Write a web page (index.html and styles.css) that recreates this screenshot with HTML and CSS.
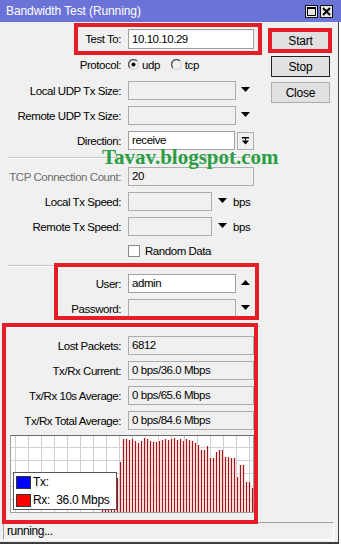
FILE: index.html
```html
<!DOCTYPE html>
<html lang="en">
<head>
    <meta charset="UTF-8">
    <meta name="viewport" content="width=device-width, initial-scale=1.0">
    <title>Bandwidth Test (Running)</title>
    <link rel="stylesheet" href="styles.css">
</head>
<body>
    <div class="app">
        <div class="titlebar">
            <span class="title">Bandwidth Test (Running)</span>
            <span class="tb-btn"><svg width="9" height="9" viewBox="0 0 9 9"><path d="M0.5 0.5H8.5V8.5H0.5Z" fill="none" stroke="#000"/><rect x="0" y="0" width="9" height="2" fill="#000"/></svg></span>
            <span class="tb-btn"><svg width="9" height="9" viewBox="0 0 9 9"><path d="M1 1L8 8M8 1L1 8" stroke="#000" stroke-width="2"/></svg></span>
        </div>
        <div class="frame">
            <div class="main">
                <div class="form">
                    <div class="row">
                        <label>Test To:</label>
                        <div class="field"><span class="inp on wide tall">10.10.10.29</span></div>
                    </div>
                    <div class="row gap1">
                        <label>Protocol:</label>
                        <div class="field">
                            <svg class="radio" width="11" height="11" viewBox="0 0 11 11"><path d="M2 9A4.7 4.7 0 0 1 9 2" fill="none" stroke="#555" stroke-width="1.4"/><path d="M9 2A4.7 4.7 0 0 1 2 9" fill="none" stroke="#d8d8d8" stroke-width="1.4"/><circle cx="5.5" cy="5.5" r="2" fill="#000"/></svg>
                            <span class="opt">udp</span>
                            <svg class="radio" width="11" height="11" viewBox="0 0 11 11"><path d="M2 9A4.7 4.7 0 0 1 9 2" fill="none" stroke="#555" stroke-width="1.4"/><path d="M9 2A4.7 4.7 0 0 1 2 9" fill="none" stroke="#d8d8d8" stroke-width="1.4"/></svg>
                            <span class="opt">tcp</span>
                        </div>
                    </div>
                    <div class="row gap1">
                        <label>Local UDP Tx Size:</label>
                        <div class="field"><span class="inp mid"></span><svg class="arr" width="9" height="5"><path d="M0 0H9L4.5 5Z"/></svg></div>
                    </div>
                    <div class="row">
                        <label>Remote UDP Tx Size:</label>
                        <div class="field"><span class="inp mid"></span><svg class="arr" width="9" height="5"><path d="M0 0H9L4.5 5Z"/></svg></div>
                    </div>
                    <div class="row">
                        <label>Direction:</label>
                        <div class="field">
                            <span class="inp on dir">receive</span>
                            <span class="ddbtn"><svg width="7" height="8" viewBox="0 0 7 8"><rect x="0" y="0" width="7" height="1.5"/><rect x="3" y="1.5" width="1" height="2"/><path d="M0 3.5H7L3.5 7.5Z"/></svg></span>
                        </div>
                    </div>
                    <div class="sep sep-a"></div>
                    <div class="row">
                        <label class="off">TCP Connection Count:</label>
                        <div class="field"><span class="inp wide">20</span></div>
                    </div>
                    <div class="row">
                        <label>Local Tx Speed:</label>
                        <div class="field"><span class="inp speed"></span><svg class="arr arr-s" width="9" height="5"><path d="M0 0H9L4.5 5Z"/></svg><span class="unit">bps</span></div>
                    </div>
                    <div class="row">
                        <label>Remote Tx Speed:</label>
                        <div class="field"><span class="inp speed"></span><svg class="arr arr-s" width="9" height="5"><path d="M0 0H9L4.5 5Z"/></svg><span class="unit">bps</span></div>
                    </div>
                    <div class="row short">
                        <label></label>
                        <div class="field"><span class="check"></span><span class="opt">Random Data</span></div>
                    </div>
                    <div class="sep sep-b"></div>
                    <div class="row">
                        <label>User:</label>
                        <div class="field"><span class="inp on mid">admin</span><svg class="arr" width="9" height="5"><path d="M0 5H9L4.5 0Z"/></svg></div>
                    </div>
                    <div class="row">
                        <label>Password:</label>
                        <div class="field"><span class="inp mid"></span><svg class="arr" width="9" height="5"><path d="M0 0H9L4.5 5Z"/></svg></div>
                    </div>
                    <div class="sep sep-c"></div>
                    <div class="row">
                        <label>Lost Packets:</label>
                        <div class="field"><span class="inp wide">6812</span></div>
                    </div>
                    <div class="row">
                        <label>Tx/Rx Current:</label>
                        <div class="field"><span class="inp wide">0 bps/36.0 Mbps</span></div>
                    </div>
                    <div class="row">
                        <label>Tx/Rx 10s Average:</label>
                        <div class="field"><span class="inp wide">0 bps/65.6 Mbps</span></div>
                    </div>
                    <div class="row">
                        <label>Tx/Rx Total Average:</label>
                        <div class="field"><span class="inp wide">0 bps/84.6 Mbps</span></div>
                    </div>
                    <div class="graph">
                        <svg width="242" height="76" viewBox="1 1 242 76">
                            <defs>
                                <pattern id="grid" x="5" y="12" width="13" height="13" patternUnits="userSpaceOnUse">
                                    <path d="M0.5 0V13M0 0.5H13" stroke="#d0d0d0" stroke-width="1"/>
                                </pattern>
                                <path id="bars" d="M92.5 74V78M95.5 74V78M98.5 74V78M101.5 74V78M104.5 74V78M107.5 43V78M110.5 27V78M113.5 4V78M116.5 4V78M119.5 5V78M122.5 4V78M125.5 6V78M128.5 8V78M131.5 6V78M134.5 3V78M137.5 4V78M140.5 6V78M143.5 7V78M146.5 7V78M149.5 6V78M152.5 5V78M155.5 4V78M158.5 5V78M161.5 4V78M164.5 3V78M167.5 5V78M170.5 4V78M173.5 6V78M176.5 4V78M179.5 5V78M182.5 6V78M185.5 8V78M188.5 10V78M191.5 15V78M194.5 15V78M197.5 11V78M200.5 23V78M203.5 23V78M206.5 17V78M209.5 15V78M212.5 15V78M215.5 22V78M218.5 22V78M221.5 23V78M224.5 23V78M227.5 42V78M230.5 30V78M233.5 30V78M236.5 47V78M239.5 47V78M242.5 53V78"/>
                            </defs>
                            <rect x="0" y="0" width="244" height="78" fill="#fff"/>
                            <rect x="0" y="0" width="244" height="78" fill="url(#grid)"/>
                            <use href="#bars" stroke="#f4c4c4" stroke-width="3" opacity="0.6"/>
                            <use href="#bars" stroke="#a3161c" stroke-width="1"/>
                        </svg>
                        <div class="legend">
                            <div class="key"><span class="swatch tx"></span>Tx:</div>
                            <div class="key"><span class="swatch rx"></span>Rx:&nbsp;&nbsp;36.0 Mbps</div>
                        </div>
                    </div>
                </div>
                <div class="buttons">
                    <button class="btn">Start</button>
                    <button class="btn default">Stop</button>
                    <button class="btn">Close</button>
                </div>
            </div>
            <div class="status">running...</div>
        </div>

        <!-- annotation boxes drawn over the dialog -->
        <div class="mark mark-test"></div>
        <div class="mark mark-start"></div>
        <div class="mark mark-user"></div>
        <div class="mark mark-stats"></div>
        <div class="watermark">Tavav.blogspot.com</div>
    </div>
</body>
</html>
```

FILE: styles.css
```css
body {
    margin: 0;
    background: #fff;
    font-family: "Liberation Sans", Arial, sans-serif;
    font-size: 11.5px;
    letter-spacing: -0.45px;
    color: #000;
}
.app {
    position: relative;
    width: 341px;
    height: 544px;
    overflow: hidden;
    background: #fff;
}
.titlebar {
    height: 22px;
    background: #6c73d6;
    display: flex;
    align-items: center;
    padding: 0 8px 0 6px;
    color: #fff;
}
.title {
    flex: 1;
    font-size: 12px;
    letter-spacing: -0.1px;
}
.tb-btn {
    width: 11px;
    height: 11px;
    border: 1px solid #111;
    background: #e6e6e6;
    margin-left: 2px;
    display: flex;
    align-items: center;
    justify-content: center;
}
.frame {
    width: 338px;
    height: 520px;
    background: #f0f0f0;
    border-right: 1px solid #3c3c3c;
    border-bottom: 2px solid #3c3c3c;
}
.main {
    display: flex;
    height: 491px;
}
.form {
    width: 262px;
    padding-top: 4px;
}
.row {
    display: grid;
    grid-template-columns: 121px auto;
    column-gap: 7px;
    align-items: center;
    height: 25px;
}
.row.gap1 {
    margin-top: 1px;
}
.row.short {
    height: 23px;
}
.row label {
    text-align: right;
    white-space: nowrap;
}
.row label.off {
    color: #6d6d6d;
}
.field {
    display: flex;
    align-items: center;
    white-space: nowrap;
}
.inp {
    box-sizing: border-box;
    height: 19px;
    line-height: 17px;
    border: 1px solid #acacac;
    background: #f0f0f0;
    padding: 0 3px;
    overflow: hidden;
}
.inp.on {
    background: #fff;
    border-color: #a0a0a0;
}
.inp.tall {
    height: 20px;
    line-height: 18px;
}
.inp.wide { width: 126px; }
.inp.mid { width: 108px; }
.inp.dir { width: 107px; }
.inp.speed { width: 84px; }
.arr {
    margin-left: 5px;
    margin-top: -3px;
}
.arr-s {
    margin-left: 6px;
}
.unit {
    margin-left: 6px;
}
.ddbtn {
    box-sizing: border-box;
    width: 17px;
    height: 18px;
    margin-left: 2px;
    border: 1px solid #acacac;
    background: #f0f0f0;
    display: flex;
    align-items: center;
    justify-content: center;
}
.radio {
    flex: none;
}
.opt {
    margin-left: 3px;
    margin-right: 11px;
}
.check {
    box-sizing: border-box;
    width: 12px;
    height: 12px;
    border: 1px solid #8a8a8a;
    background: #fff;
    margin-right: 2px;
}
.sep {
    margin-left: 8px;
    width: 252px;
    border-top: 1px solid #c6c6c6;
    border-bottom: 1px solid #fff;
}
.sep-a { margin-top: 4px; margin-bottom: 5px; }
.sep-b { margin-top: 3px; margin-bottom: 4px; }
.sep-c { margin-top: 5px; margin-bottom: 5px; }
.graph {
    position: relative;
    box-sizing: border-box;
    width: 244px;
    height: 78px;
    margin: 2px 0 0 10px;
    border: 1px solid #a0a0a0;
    border-top-color: #6a6a6a;
}
.graph svg {
    display: block;
}
.legend {
    position: absolute;
    left: 2px;
    top: 36px;
    box-sizing: border-box;
    width: 104px;
    height: 38px;
    padding: 0 2px;
    background: #fff;
    border: 1px solid #555;
    font-size: 12px;
    letter-spacing: -0.3px;
}
.key {
    display: flex;
    align-items: center;
    height: 18px;
}
.swatch {
    box-sizing: border-box;
    width: 15px;
    height: 13px;
    margin-right: 2px;
    border: 1px solid #333;
}
.swatch.tx { background: #0000ff; }
.swatch.rx { background: #ff0000; }
.buttons {
    display: flex;
    flex-direction: column;
    gap: 5px;
    padding-top: 8px;
    margin-left: 9px;
}
.btn {
    width: 59px;
    height: 21px;
    padding: 0;
    background: #e1e1e1;
    border: 1px solid #adadad;
    font-family: "Liberation Sans", Arial, sans-serif;
    font-size: 12px;
    letter-spacing: -0.2px;
    color: #000;
}
.btn.default {
    border-color: #222;
}
.status {
    box-sizing: border-box;
    height: 18px;
    margin: 9px 4px 0 3px;
    padding-left: 3px;
    line-height: 16px;
    font-size: 12px;
    border-top: 1px solid #a0a0a0;
    border-left: 1px solid #a0a0a0;
    border-right: 1px solid #fff;
    border-bottom: 1px solid #fff;
}
.mark {
    position: absolute;
    border: 4px solid #e31e26;
}
.mark-test { left: 74px; top: 23px; width: 180px; height: 24px; }
.mark-start { left: 268px; top: 28px; width: 56px; height: 17px; }
.mark-user { left: 54px; top: 263px; width: 197px; height: 49px; }
.mark-stats { left: 2px; top: 323px; width: 248px; height: 193px; }
.watermark {
    position: absolute;
    left: 102px;
    top: 147px;
    font-family: "Liberation Serif", "Times New Roman", serif;
    font-weight: bold;
    font-size: 21px;
    line-height: 21px;
    letter-spacing: 0;
    color: #2a9e44;
}
```
